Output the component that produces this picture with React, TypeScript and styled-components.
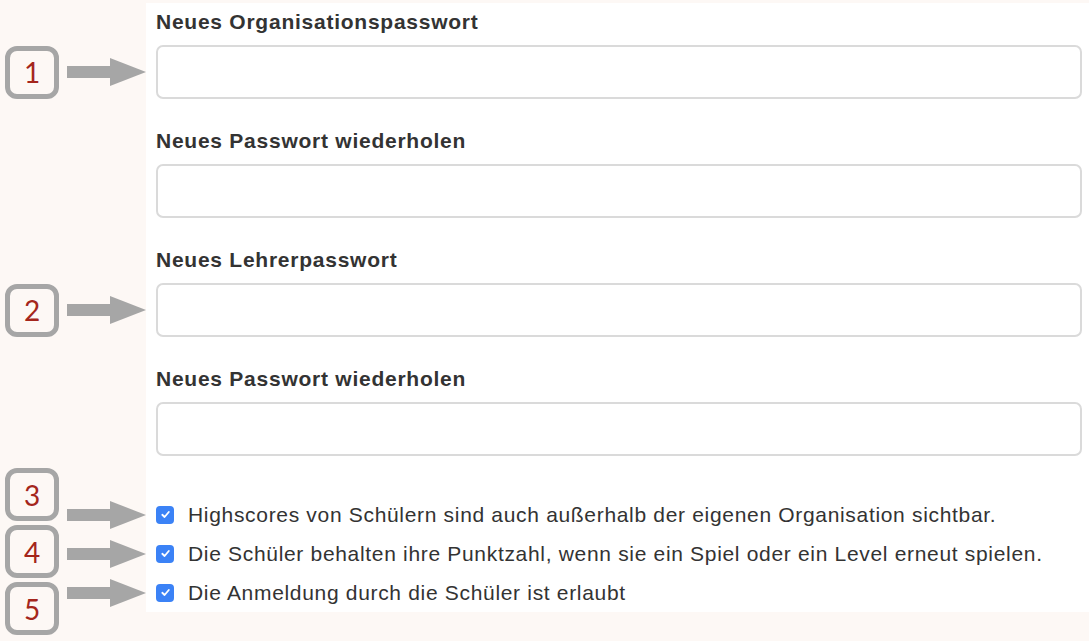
import styled, { createGlobalStyle } from "styled-components";

const GlobalStyle = createGlobalStyle`
  html, body {
    margin: 0;
    padding: 0;
    background: #fdf8f5;
  }
  body {
    font-family: "Liberation Sans", Arial, Helvetica, sans-serif;
    color: #333;
  }
`;

const Sheet = styled.div`
  width: 1089px;
  padding-top: 3px;
  display: flex;
  flex-direction: column;
`;

const Row = styled.div`
  display: grid;
  grid-template-columns: 146px 1fr;
  align-items: stretch;
`;

const Gutter = styled.div<{ $bottom?: number }>`
  display: flex;
  flex-direction: row;
  align-items: flex-end;
  gap: 8px;
  padding-left: 5px;
  padding-bottom: ${(p) => p.$bottom ?? 0}px;
`;

const Panel = styled.div<{ $top?: number; $bottom?: number }>`
  background: #fff;
  align-self: start;
  padding: ${(p) => p.$top ?? 0}px 7px ${(p) => p.$bottom ?? 0}px 10px;
`;

const Label = styled.div`
  font-weight: bold;
  font-size: 21px;
  line-height: 24px;
  letter-spacing: 0.75px;
  color: #333;
  margin-bottom: 11px;
`;

const Input = styled.input`
  display: block;
  box-sizing: border-box;
  width: 100%;
  height: 54px;
  border: 2px solid #dadada;
  border-radius: 7px;
  background: #fff;
  outline: none;
`;

const Marker = styled.div`
  height: 54px;
  display: flex;
  align-items: center;
  gap: 8px;
`;

const NumberBox = styled.div`
  box-sizing: border-box;
  width: 54px;
  height: 53px;
  border: 5px solid #a6a6a6;
  border-radius: 12px;
  background: #fdf8f5;
  display: flex;
  align-items: center;
  justify-content: center;
  font-family: Lato, "Open Sans", sans-serif;
  font-size: 28px;
  color: #a4261c;
  line-height: 1;
`;

const BoxStack = styled.div`
  display: flex;
  flex-direction: column;
  gap: 4px;
  margin-top: -18px;
  align-self: flex-start;
`;

const ArrowStack = styled.div`
  display: flex;
  flex-direction: column;
  padding-top: 9px;
  align-self: flex-start;
`;

const ArrowSlot = styled.div`
  height: 39px;
  display: flex;
  align-items: center;
`;

const CheckList = styled.div`
  display: flex;
  flex-direction: column;
`;

const CheckRow = styled.label`
  height: 39px;
  display: flex;
  align-items: center;
  gap: 14px;
  font-size: 21px;
  letter-spacing: 0.68px;
  color: #333;
`;

const CheckBox = styled.span`
  width: 18px;
  height: 18px;
  border-radius: 4px;
  background: #3b82f6;
  display: flex;
  align-items: center;
  justify-content: center;
  flex-shrink: 0;
`;

function Arrow() {
  return (
    <svg width="79" height="28" viewBox="0 0 79 28">
      <rect x="0" y="8" width="44" height="12" fill="#a6a6a6" />
      <polygon points="43,0 79,14 43,28" fill="#a6a6a6" />
    </svg>
  );
}

function Check() {
  return (
    <CheckBox>
      <svg width="11" height="11" viewBox="0 0 12 12">
        <path d="M2.5 6.3 L5 8.7 L9.6 3.3" fill="none" stroke="#fff" strokeWidth="2" strokeLinecap="round" strokeLinejoin="round" />
      </svg>
    </CheckBox>
  );
}

const fields = [
  { label: "Neues Organisationspasswort", marker: "1" },
  { label: "Neues Passwort wiederholen" },
  { label: "Neues Lehrerpasswort", marker: "2" },
  { label: "Neues Passwort wiederholen" },
];

const options = [
  "Highscores von Schülern sind auch außerhalb der eigenen Organisation sichtbar.",
  "Die Schüler behalten ihre Punktzahl, wenn sie ein Spiel oder ein Level erneut spielen.",
  "Die Anmeldung durch die Schüler ist erlaubt",
];

function App() {
  return (
    <>
      <GlobalStyle />
      <Sheet>
        {fields.map((f, i) => (
          <Row key={i}>
            <Gutter $bottom={30}>
              {f.marker && (
                <Marker>
                  <NumberBox>{f.marker}</NumberBox>
                  <Arrow />
                </Marker>
              )}
            </Gutter>
            <Panel $top={i === 0 ? 7 : 0} $bottom={30}>
              <Label>{f.label}</Label>
              <Input type="password" />
            </Panel>
          </Row>
        ))}
        <Row>
          <Gutter>
            <BoxStack>
              <NumberBox>3</NumberBox>
              <NumberBox>4</NumberBox>
              <NumberBox>5</NumberBox>
            </BoxStack>
            <ArrowStack>
              {options.map((o) => (
                <ArrowSlot key={o}>
                  <Arrow />
                </ArrowSlot>
              ))}
            </ArrowStack>
          </Gutter>
          <Panel $top={9}>
            <CheckList>
              {options.map((o) => (
                <CheckRow key={o}>
                  <Check />
                  {o}
                </CheckRow>
              ))}
            </CheckList>
          </Panel>
        </Row>
      </Sheet>
    </>
  );
}

export default App;
